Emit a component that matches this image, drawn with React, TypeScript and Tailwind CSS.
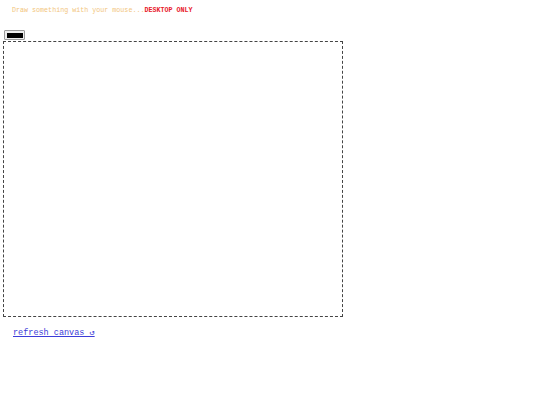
import React from 'react';

export default function App() {
  return (
    <div className="w-[540px] h-[405px] bg-white" style={{ fontFamily: '"Liberation Mono", monospace' }}>
      {/* Header line */}
      <p className="pl-[12px] pt-[6px] text-[6.7px] leading-[9px]">
        <span className="text-[#f2c57c]">Draw something with your mouse...</span>
        <span className="text-[#e8202a] font-bold">DESKTOP ONLY</span>
      </p>

      {/* Colour picker */}
      <div className="ml-[4px] mt-[15px] w-[21px] h-[10px] border border-[#9a9a9a] rounded-[1px] bg-[#eeeeee] p-[1.5px]">
        <div className="w-full h-full bg-black" />
      </div>

      {/* Canvas */}
      <div className="ml-[3px] mt-[1px] w-[340px] h-[276px] border border-dashed border-[#444444]" />

      {/* Refresh */}
      <div className="pl-[13px] mt-[10px]">
        <a href="#" className="block text-[8.5px] leading-[12px] text-[#3c3cd8] underline">
          refresh canvas ↺
        </a>
      </div>
    </div>
  );
}
